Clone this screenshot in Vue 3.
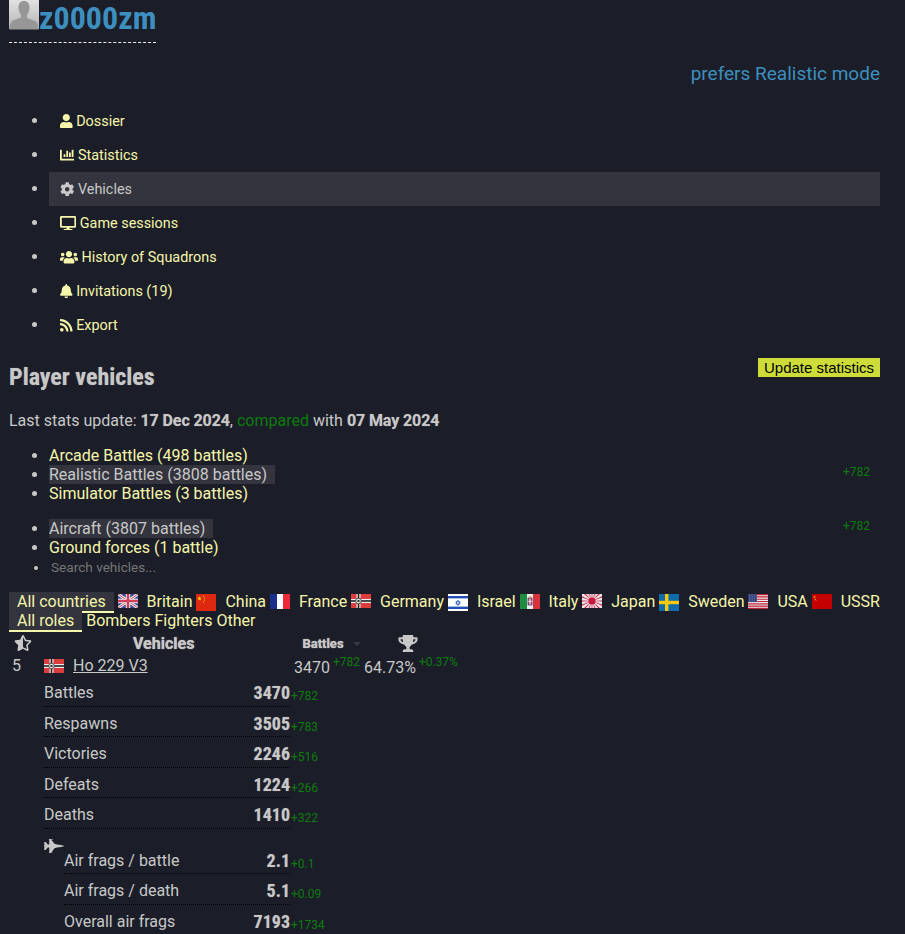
<template>
  <div class="page">
    <header class="profile-head">
      <h1 class="nick">
        <svg class="avatar" viewBox="0 0 30 30">
          <defs>
            <linearGradient id="ava" x1="0" y1="0" x2="0" y2="1">
              <stop offset="0" stop-color="#e2e2e2" />
              <stop offset="1" stop-color="#b4b4b4" />
            </linearGradient>
          </defs>
          <rect width="30" height="29" fill="url(#ava)" />
          <path d="M15 1c3.6 0 5.5 2.5 5.5 6.5 0 3-1 5.500-2.500 7.500v3l8 3c2 1 3 3 3.500 8.500H.5C1 23.500 2 21.500 4 20.500l8-3v-2.500c-1.500-2-2.500-4.500-2.500-7.500C9.500 3.500 11.400 1 15 1z" fill="#979797" />
        </svg><span class="nick-text">z0000zm</span>
      </h1>
    </header>
    <div class="prefers">prefers Realistic mode</div>

    <ul class="nav">
      <li v-for="item in navItems" :key="item.label" :class="{ active: item.active }">
        <a>
          <svg class="fa" :viewBox="icons[item.icon].box"><path :d="icons[item.icon].d" /></svg>
          {{ item.label }}
        </a>
      </li>
    </ul>

    <div class="title-row">
      <h2>Player vehicles</h2>
      <button class="update">Update statistics</button>
    </div>

    <p class="last-update">
      Last stats update: <b>17 Dec 2024</b>, <span class="green">compared</span> with <b>07 May 2024</b>
    </p>

    <ul class="modes">
      <li v-for="m in modes" :key="m.label">
        <span class="mode" :class="{ active: m.active }">{{ m.label }}</span>
        <span v-if="m.delta" class="mode-delta">{{ m.delta }}</span>
      </li>
    </ul>

    <ul class="modes second">
      <li v-for="m in classes" :key="m.label">
        <span class="mode" :class="{ active: m.active }">{{ m.label }}</span>
        <span v-if="m.delta" class="mode-delta">{{ m.delta }}</span>
      </li>
      <li class="search">Search vehicles...</li>
    </ul>

    <div class="countries">
      <span class="tab on">All countries</span>
      <span v-for="c in countries" :key="c.name" class="country">
        <svg class="flag" :viewBox="`0 0 20 ${c.h}`" :style="{ height: c.h + 'px' }">
          <template v-if="c.name === 'Britain'">
            <rect width="20" height="14" fill="#3a4a98" />
            <path d="M0 0l20 14M20 0L0 14" stroke="#eee" stroke-width="3" />
            <path d="M0 0l20 14M20 0L0 14" stroke="#d04058" stroke-width="1" />
            <path d="M10 0v14M0 7h20" stroke="#eee" stroke-width="4.5" />
            <path d="M10 0v14M0 7h20" stroke="#d04058" stroke-width="2.5" />
          </template>
          <template v-else-if="c.name === 'China'">
            <rect width="20" height="17" fill="#de2910" />
            <path d="M3.5 2l.6 1.700h1.700L4.400 4.800l.6 1.700-1.500-1-1.500 1 .6-1.700L1.200 3.700h1.700z" fill="#ffde00" />
            <circle cx="7.5" cy="2" r=".6" fill="#ffde00" /><circle cx="8.5" cy="4" r=".6" fill="#ffde00" />
            <circle cx="8.5" cy="6" r=".6" fill="#ffde00" /><circle cx="7.5" cy="8" r=".6" fill="#ffde00" />
          </template>
          <template v-else-if="c.name === 'France'">
            <rect width="7" height="15" fill="#1d2f8c" /><rect x="7" width="6" height="15" fill="#fff" /><rect x="13" width="7" height="15" fill="#ee2838" />
          </template>
          <template v-else-if="c.name === 'Germany'">
            <rect width="20" height="14" fill="#dc3c3c" />
            <rect y="5" width="20" height="4" fill="#eee" /><rect x="5.5" width="4" height="14" fill="#eee" />
            <rect y="6.2" width="20" height="1.6" fill="#222" /><rect x="6.7" width="1.6" height="14" fill="#222" />
            <circle cx="7.5" cy="7" r="2.8" fill="#ddd" stroke="#333" stroke-width=".8" />
            <rect x="6.5" y="6" width="2" height="2" fill="#333" />
          </template>
          <template v-else-if="c.name === 'Israel'">
            <rect width="20" height="17" fill="#fff" />
            <rect y="2" width="20" height="2.4" fill="#2050b8" /><rect y="12.6" width="20" height="2.4" fill="#2050b8" />
            <path d="M10 6.200l2.200 3.800H7.800zM10 11.400L7.800 7.600h4.400z" fill="none" stroke="#2050b8" stroke-width=".7" />
          </template>
          <template v-else-if="c.name === 'Italy'">
            <rect width="7" height="15" fill="#1e8c3c" /><rect x="7" width="6" height="15" fill="#eee" /><rect x="13" width="7" height="15" fill="#d8323c" />
            <rect x="8" y="4" width="4" height="7" fill="#c83040" stroke="#3a4ea0" stroke-width=".8" />
            <rect x="9.4" y="4.5" width="1.2" height="6" fill="#eee" /><rect x="8.4" y="6.8" width="3.2" height="1.2" fill="#eee" />
            <rect x="8.8" y="2.4" width="2.4" height="1.4" fill="#c8a030" />
          </template>
          <template v-else-if="c.name === 'Japan'">
            <rect width="20" height="14" fill="#f0e4e4" />
            <path v-for="r in rays" :key="r" d="M10 7L24 6.200v1.600z" fill="#c81840" :transform="`rotate(${r} 10 7)`" />
            <circle cx="10" cy="7" r="3.6" fill="#c81840" />
          </template>
          <template v-else-if="c.name === 'Sweden'">
            <rect width="20" height="17" fill="#0f6cab" />
            <rect x="6" width="3.4" height="17" fill="#fcc80a" /><rect y="6.8" width="20" height="3.4" fill="#fcc80a" />
          </template>
          <template v-else-if="c.name === 'USA'">
            <rect width="20" height="15" fill="#eee" />
            <path d="M0 .6h20M0 2.900h20M0 5.200h20M0 7.500h20M0 9.800h20M0 12.100h20M0 14.400h20" stroke="#c02038" stroke-width="1.15" />
            <rect width="9" height="8.1" fill="#2e3a78" />
            <path d="M1 1h8M1 3h8M1 5h8M1 7h8" stroke="#c8cce0" stroke-width=".7" stroke-dasharray=".7 1" />
          </template>
          <template v-else>
            <rect width="20" height="15" fill="#c40000" />
            <path d="M2.500 1.500l.5 1.200h1l-.8.7.3 1.100-1-.7-1 .7.3-1.100-.8-.7h1zM3 4.800l1.800 1.400-.7.5L2.300 5.500z" fill="#e8a020" />
          </template>
        </svg>
        <span class="c-name">{{ c.name }}</span>
      </span>
    </div>

    <div class="roles">
      <span class="tab on">All roles</span>
      <span class="role">Bombers</span>
      <span class="role">Fighters</span>
      <span class="role">Other</span>
    </div>

    <div class="t-head">
      <svg class="star" :viewBox="icons.star.box"><path :d="icons.star.d" /></svg>
      <span class="th-veh">Vehicles</span>
      <span class="th-bat">Battles<i class="caret"></i></span>
      <svg class="trophy" :viewBox="icons.trophy.box"><path :d="icons.trophy.d" /></svg>
    </div>

    <div class="t-row">
      <span class="rank">5</span>
      <svg class="flag small" viewBox="0 0 20 14">
        <rect width="20" height="14" fill="#dc3c3c" />
        <rect y="5" width="20" height="4" fill="#eee" /><rect x="5.5" width="4" height="14" fill="#eee" />
        <rect y="6.2" width="20" height="1.6" fill="#222" /><rect x="6.7" width="1.6" height="14" fill="#222" />
        <circle cx="7.5" cy="7" r="2.8" fill="#ddd" stroke="#333" stroke-width=".8" />
        <rect x="6.5" y="6" width="2" height="2" fill="#333" />
      </svg>
      <a class="veh-name">Ho 229 V3</a>
      <span class="battles">3470<sup class="delta">+782</sup></span>
      <span class="winrate">64.73%<sup class="delta">+0.37%</sup></span>
    </div>

    <div class="stats">
      <div v-for="s in mainStats" :key="s.label" class="stat">
        <span class="s-label">{{ s.label }}</span>
        <b class="s-val">{{ s.value }}</b>
        <span class="s-delta">{{ s.delta }}</span>
      </div>
      <svg class="jet" :viewBox="icons.jet.box"><path :d="icons.jet.d" /></svg>
      <div class="air">
        <div v-for="s in airStats" :key="s.label" class="stat">
          <span class="s-label">{{ s.label }}</span>
          <b class="s-val">{{ s.value }}</b>
          <span class="s-delta">{{ s.delta }}</span>
        </div>
      </div>
    </div>
  </div>
</template>

<script setup>
const icons = {
  user: { box: '0 0 448 512', d: 'M224 256c70.7 0 128-57.3 128-128S294.7 0 224 0 96 57.3 96 128s57.3 128 128 128zm89.6 32h-16.7c-22.2 10.2-46.9 16-72.9 16s-50.6-5.8-72.9-16h-16.7C60.2 288 0 348.2 0 422.4V464c0 26.5 21.5 48 48 48h352c26.5 0 48-21.5 48-48v-41.6c0-74.2-60.2-134.4-134.4-134.4z' },
  chart: { box: '0 0 512 512', d: 'M332.8 320h38.4c6.4 0 12.8-6.4 12.8-12.8V172.8c0-6.4-6.4-12.8-12.8-12.8h-38.4c-6.4 0-12.8 6.4-12.8 12.8v134.4c0 6.4 6.4 12.8 12.8 12.8zm96 0h38.4c6.4 0 12.8-6.4 12.8-12.8V76.8c0-6.4-6.4-12.8-12.8-12.8h-38.4c-6.4 0-12.8 6.4-12.8 12.8v230.4c0 6.4 6.4 12.8 12.8 12.8zm-288 0h38.4c6.4 0 12.8-6.4 12.8-12.8v-70.4c0-6.4-6.4-12.8-12.8-12.8h-38.4c-6.4 0-12.8 6.4-12.8 12.8v70.4c0 6.4 6.4 12.8 12.8 12.8zm96 0h38.4c6.4 0 12.8-6.4 12.8-12.8V108.8c0-6.4-6.4-12.8-12.8-12.8h-38.4c-6.4 0-12.8 6.4-12.8 12.8v198.4c0 6.4 6.4 12.8 12.8 12.8zM496 384H64V80c0-8.84-7.16-16-16-16H16C7.16 64 0 71.16 0 80v336c0 17.67 14.33 32 32 32h464c8.84 0 16-7.16 16-16v-32c0-8.84-7.16-16-16-16z' },
  cog: { box: '0 0 512 512', d: 'M487.4 315.7l-42.6-24.6c4.3-23.2 4.3-47 0-70.2l42.6-24.6c4.9-2.8 7.1-8.6 5.5-14-11.1-35.6-30-67.8-54.7-94.6-3.8-4.1-10-5.1-14.8-2.3L380.8 110c-17.9-15.4-38.5-27.3-60.8-35.1V25.8c0-5.6-3.9-10.5-9.4-11.7-36.7-8.2-74.3-7.8-109.2 0-5.5 1.2-9.4 6.1-9.4 11.7V75c-22.2 7.9-42.8 19.8-60.8 35.1L88.7 85.5c-4.9-2.8-11-1.9-14.8 2.3-24.7 26.7-43.6 58.9-54.7 94.6-1.7 5.4.6 11.2 5.5 14L67.3 221c-4.3 23.2-4.3 47 0 70.2l-42.6 24.6c-4.9 2.8-7.1 8.6-5.5 14 11.1 35.6 30 67.8 54.7 94.6 3.8 4.1 10 5.1 14.8 2.3l42.6-24.6c17.9 15.4 38.5 27.3 60.8 35.1v49.2c0 5.6 3.9 10.5 9.4 11.7 36.7 8.2 74.3 7.8 109.2 0 5.5-1.2 9.4-6.1 9.4-11.7v-49.2c22.2-7.9 42.8-19.8 60.8-35.1l42.6 24.6c4.9 2.8 11 1.9 14.8-2.3 24.7-26.7 43.6-58.9 54.7-94.6 1.5-5.5-.7-11.3-5.6-14.1zM256 336c-44.1 0-80-35.9-80-80s35.9-80 80-80 80 35.9 80 80-35.9 80-80 80z' },
  desktop: { box: '0 0 576 512', d: 'M528 0H48C21.5 0 0 21.5 0 48v320c0 26.5 21.5 48 48 48h192l-16 48h-72c-13.3 0-24 10.7-24 24s10.7 24 24 24h272c13.3 0 24-10.7 24-24s-10.7-24-24-24h-72l-16-48h192c26.5 0 48-21.5 48-48V48c0-26.5-21.5-48-48-48zm-16 352H64V64h448v288z' },
  users: { box: '0 0 640 512', d: 'M96 224c35.3 0 64-28.7 64-64s-28.7-64-64-64-64 28.7-64 64 28.7 64 64 64zm448 0c35.3 0 64-28.7 64-64s-28.7-64-64-64-64 28.7-64 64 28.7 64 64 64zm32 32h-64c-17.6 0-33.5 7.1-45.1 18.6 40.3 22.1 68.9 62 75.1 109.4h66c17.7 0 32-14.3 32-32v-32c0-35.3-28.7-64-64-64zm-256 0c61.9 0 112-50.1 112-112S381.9 32 320 32 208 82.1 208 144s50.1 112 112 112zm76.8 32h-8.3c-20.8 10-43.9 16-68.5 16s-47.6-6-68.5-16h-8.3C179.6 288 128 339.6 128 403.2V432c0 26.5 21.5 48 48 48h288c26.5 0 48-21.5 48-48v-28.8c0-63.6-51.6-115.2-115.2-115.2zm-223.7-13.4C161.5 263.1 145.6 256 128 256H64c-35.3 0-64 28.7-64 64v32c0 17.7 14.3 32 32 32h65.9c6.3-47.4 34.9-87.3 75.2-109.4z' },
  bell: { box: '0 0 448 512', d: 'M224 512c35.32 0 63.97-28.65 63.97-64H160.03c0 35.35 28.65 64 63.97 64zm215.39-149.71c-19.32-20.76-55.47-51.99-55.47-154.29 0-77.7-54.48-139.9-127.94-155.16V32c0-17.67-14.32-32-31.98-32s-31.98 14.33-31.98 32v20.84C118.56 68.1 64.08 130.3 64.08 208c0 102.3-36.15 133.53-55.47 154.29-6 6.45-8.66 14.16-8.61 21.71.11 16.4 12.98 32 32.1 32h383.8c19.12 0 32-15.6 32.1-32 .05-7.55-2.61-15.27-8.61-21.71z' },
  rss: { box: '0 0 448 512', d: 'M128.081 415.959c0 35.369-28.672 64.041-64.041 64.041S0 451.328 0 415.959s28.672-64.041 64.041-64.041 64.04 28.673 64.04 64.041zm175.66 47.25c-8.354-154.6-132.185-278.587-286.95-286.95C7.656 175.765 0 183.105 0 192.253v48.069c0 8.415 6.49 15.472 14.887 16.018 111.832 7.284 201.473 96.702 208.772 208.772.547 8.397 7.604 14.887 16.018 14.887h48.069c9.149.001 16.489-7.655 15.995-16.79zm144.249.288C439.596 229.677 251.465 40.445 16.503 32.01 7.473 31.686 0 38.981 0 48.016v48.068c0 8.625 6.835 15.645 15.453 15.999 191.179 7.839 344.627 161.316 352.465 352.465.353 8.618 7.373 15.453 15.999 15.453h48.068c9.034-.001 16.329-7.474 16.005-16.504z' },
  trophy: { box: '0 0 576 512', d: 'M552 64H448V24c0-13.3-10.7-24-24-24H152c-13.3 0-24 10.7-24 24v40H24C10.7 64 0 74.7 0 88v56c0 35.7 22.5 72.4 61.9 100.7 31.5 22.7 69.8 37.1 110 41.7C203.3 338.5 240 360 240 360v72h-48c-35.3 0-64 20.7-64 56v12c0 6.6 5.4 12 12 12h296c6.6 0 12-5.4 12-12v-12c0-35.3-28.7-56-64-56h-48v-72s36.7-21.5 68.1-73.6c40.3-4.6 78.6-19 110-41.7 39.3-28.3 61.9-65 61.9-100.7V88c0-13.3-10.7-24-24-24zM99.3 192.8C74.9 175.2 64 155.6 64 144v-16h64.2c1 32.6 5.8 61.2 12.8 86.2-15.1-5.2-29.2-12.4-41.7-21.4zM512 144c0 16.1-17.7 36.1-35.3 48.8-12.5 9-26.7 16.2-41.8 21.4 7-25 11.8-53.6 12.8-86.2H512v16z' },
  star: { box: '0 0 536 512', d: 'M508.55 171.51L362.18 150.2 296.77 17.81C290.89 5.98 279.42 0 267.95 0c-11.4 0-22.79 5.9-28.69 17.81l-65.43 132.38-146.38 21.29c-26.25 3.8-36.77 36.09-17.74 54.59l105.89 103-25.06 145.48C86.98 495.33 103.57 512 122.15 512c4.93 0 10-1.17 14.87-3.75l130.95-68.68 130.94 68.7c4.86 2.55 9.92 3.71 14.83 3.71 18.6 0 35.22-16.61 31.66-37.4l-25.03-145.49 105.91-102.98c19.04-18.5 8.52-50.8-17.73-54.6zm-121.74 123.2l-18.12 17.62 4.28 24.88 19.52 113.45-102.13-53.59-22.38-11.74.03-317.19 51.03 103.29 11.18 22.63 25.01 3.64 114.23 16.63-82.65 80.38z' },
  jet: { box: '0 0 640 512', d: 'M544 224l-128-16-48-16h-24L227.158 44h39.509C278.333 44 288 41.375 288 38s-9.667-6-21.333-6H152v12h16v164h-48l-66.667-80H18.667L8 138.667V208h8v16h48v2.666l-64 8v42.667l64 8V288H16v16H8v69.333L18.667 384h34.667L120 304h48v164h-16v12h114.667c11.667 0 21.333-2.625 21.333-6s-9.667-6-21.333-6h-39.509L344 320h24l48-16 128-16c96-21.333 96-26.583 96-32 0-5.417 0-10.667-96-32z' }
}

const navItems = [
  { label: 'Dossier', icon: 'user' },
  { label: 'Statistics', icon: 'chart' },
  { label: 'Vehicles', icon: 'cog', active: true },
  { label: 'Game sessions', icon: 'desktop' },
  { label: 'History of Squadrons', icon: 'users' },
  { label: 'Invitations (19)', icon: 'bell' },
  { label: 'Export', icon: 'rss' }
]

const modes = [
  { label: 'Arcade Battles (498 battles)' },
  { label: 'Realistic Battles (3808 battles)', active: true, delta: '+782' },
  { label: 'Simulator Battles (3 battles)' }
]

const classes = [
  { label: 'Aircraft (3807 battles)', active: true, delta: '+782' },
  { label: 'Ground forces (1 battle)' }
]

// h = flag height, the sprites are not all the same size
const countries = [
  { name: 'Britain', h: 14 },
  { name: 'China', h: 17 },
  { name: 'France', h: 15 },
  { name: 'Germany', h: 14 },
  { name: 'Israel', h: 17 },
  { name: 'Italy', h: 15 },
  { name: 'Japan', h: 14 },
  { name: 'Sweden', h: 17 },
  { name: 'USA', h: 15 },
  { name: 'USSR', h: 15 }
]
const rays = [0, 22.5, 45, 67.5, 90, 112.5, 135, 157.5, 180, 202.5, 225, 247.5, 270, 292.5, 315, 337.5]

const mainStats = [
  { label: 'Battles', value: '3470', delta: '+782' },
  { label: 'Respawns', value: '3505', delta: '+783' },
  { label: 'Victories', value: '2246', delta: '+516' },
  { label: 'Defeats', value: '1224', delta: '+266' },
  { label: 'Deaths', value: '1410', delta: '+322' }
]

const airStats = [
  { label: 'Air frags / battle', value: '2.1', delta: '+0.1' },
  { label: 'Air frags / death', value: '5.1', delta: '+0.09' },
  { label: 'Overall air frags', value: '7193', delta: '+1734' }
]
</script>

<style>
html, body {
  background: #1b1e28;
  overflow: hidden;
}
</style>

<style scoped>
.page {
  height: 934px;
  overflow: hidden;
  box-sizing: border-box;
  padding: 0 25px 0 9px;
  background: #1b1e28;
  color: #c8c8c8;
  font-family: Roboto, "Liberation Sans", sans-serif;
  font-size: 16px;
}

.nick {
  display: inline-block;
  margin: 0;
  height: 42px;
  border-bottom: 1px dashed #eee;
  font-size: 32px;
  font-weight: 700;
  line-height: 36px;
  color: #3d8fbf;
  white-space: nowrap;
}
.profile-head {
  height: 43px;
}
.avatar {
  width: 30px;
  height: 30px;
  vertical-align: top;
}
.nick-text {
  font-stretch: 75%;
}

.prefers {
  margin-top: 20px;
  text-align: right;
  font-size: 19px;
  line-height: 22px;
  color: #3d8fbf;
}

.nav {
  margin: 19px 0 0;
  padding: 0 0 0 40px;
}
.nav li {
  height: 34px;
  line-height: 34px;
  padding-left: 11px;
  color: #f6f6aa;
}
.nav a {
  font-size: 14.4px;
}
.nav li::marker {
  color: #c8c8c8;
}
.nav li.active {
  background: #33343e;
  color: #c8c8c8;
}
.fa {
  height: 14.4px;
  fill: currentColor;
  vertical-align: -2px;
}

.title-row {
  display: flex;
  justify-content: space-between;
  align-items: flex-start;
  margin-top: 16px;
}
h2 {
  margin: 5px 0 0;
  font-size: 24px;
  line-height: 28px;
  font-weight: 700;
  font-stretch: 75%;
  text-shadow: 0 0 1px rgba(200, 200, 200, 0.5);
}
.update {
  box-sizing: border-box;
  border: 0;
  padding: 1px 6px 0;
  height: 19px;
  background: #cddc39;
  color: #000;
  font-family: "Liberation Sans", Arial, sans-serif;
  font-size: 15px;
  line-height: 18px;
}

.last-update {
  margin: 20px 0 0;
  line-height: 19px;
}
.last-update b {
  letter-spacing: -0.1px;
  text-shadow: 0 0 1px rgba(200, 200, 200, 0.5);
}
.green {
  color: #0d7c0d;
}

.modes {
  margin: 16px 0 0;
  padding: 0 0 0 40px;
  line-height: 19px;
  color: #f6f6aa;
}
.modes.second {
  margin-top: 16px;
}
.modes li::marker {
  color: #c8c8c8;
}
.mode.active {
  display: inline-block;
  padding-right: 8px;
  background: #33343e;
  color: #c8c8c8;
}
.mode-delta {
  float: right;
  margin: -2px 10px 0 0;
  font-size: 12px;
  color: #0d7c0d;
}
.search {
  margin-top: 1px;
  padding-left: 2px;
  font-size: 13.6px;
  color: #757575;
}

.countries {
  display: flex;
  justify-content: space-between;
  align-items: flex-start;
  margin-top: 15px;
  height: 19px;
  color: #f6f6aa;
}
.tab {
  padding: 0 8px;
  line-height: 19px;
}
.tab.on {
  background: #33343e;
  border-bottom: 2px solid #f6f6aa;
}
.country {
  display: flex;
  align-items: flex-start;
  gap: 9px;
  line-height: 19px;
}
.flag {
  flex: none;
  width: 20px;
  height: 14px;
  display: block;
  margin-top: 2px;
}
.roles {
  display: flex;
  align-items: flex-start;
  gap: 4px;
  height: 20px;
  line-height: 19px;
  color: #f6f6aa;
}

.t-head {
  display: flex;
  align-items: center;
  height: 24px;
  font-weight: 700;
  text-shadow: 0 0 1px #c8c8c8;
}
.star {
  width: 18px;
  height: 16px;
  margin-left: 5px;
  fill: #c8c8c8;
}
.th-veh {
  margin-left: 101px;
}
.th-bat {
  margin-left: 108px;
  font-size: 13px;
}
.caret {
  display: inline-block;
  margin-left: 9px;
  border: 4px solid transparent;
  border-top-color: #3a3c46;
  vertical-align: -2px;
}
.trophy {
  width: 20px;
  height: 17px;
  margin-left: 37px;
  fill: #c8c8c8;
}

.t-row {
  display: flex;
  align-items: center;
  height: 21px;
}
.rank {
  width: 35px;
  padding-left: 3px;
  box-sizing: border-box;
}
.t-row .flag {
  margin-top: 0;
}
.veh-name {
  margin-left: 9px;
  width: 221px;
  text-decoration: underline;
}
.battles {
  width: 70px;
  margin-top: 3px;
}
.delta {
  margin-left: 3px;
  font-size: 12px;
  color: #0d7c0d;
  line-height: 0;
}
.winrate {
  margin-top: 3px;
}

.stats {
  margin-left: 35px;
  width: 300px;
}
.stat {
  display: flex;
  width: 246px;
  height: 30.5px;
  box-sizing: border-box;
  line-height: 33px;
  border-bottom: 1px dotted #000;
  position: relative;
}
.s-label {
  flex: 1;
}
.s-val {
  font-size: 18px;
  font-stretch: 75%;
  text-shadow: 0 0 1px rgba(200, 200, 200, 0.5);
}
.s-delta {
  position: absolute;
  left: 100%;
  top: 6px;
  margin-left: 1px;
  font-size: 12px;
  line-height: 29px;
  color: #0d7c0d;
}
.jet {
  display: block;
  width: 20px;
  height: 16px;
  margin: 9px 0 -10px;
  fill: #c8c8c8;
}
.air {
  margin-left: 20px;
}
.air .stat {
  width: 226px;
}
</style>
